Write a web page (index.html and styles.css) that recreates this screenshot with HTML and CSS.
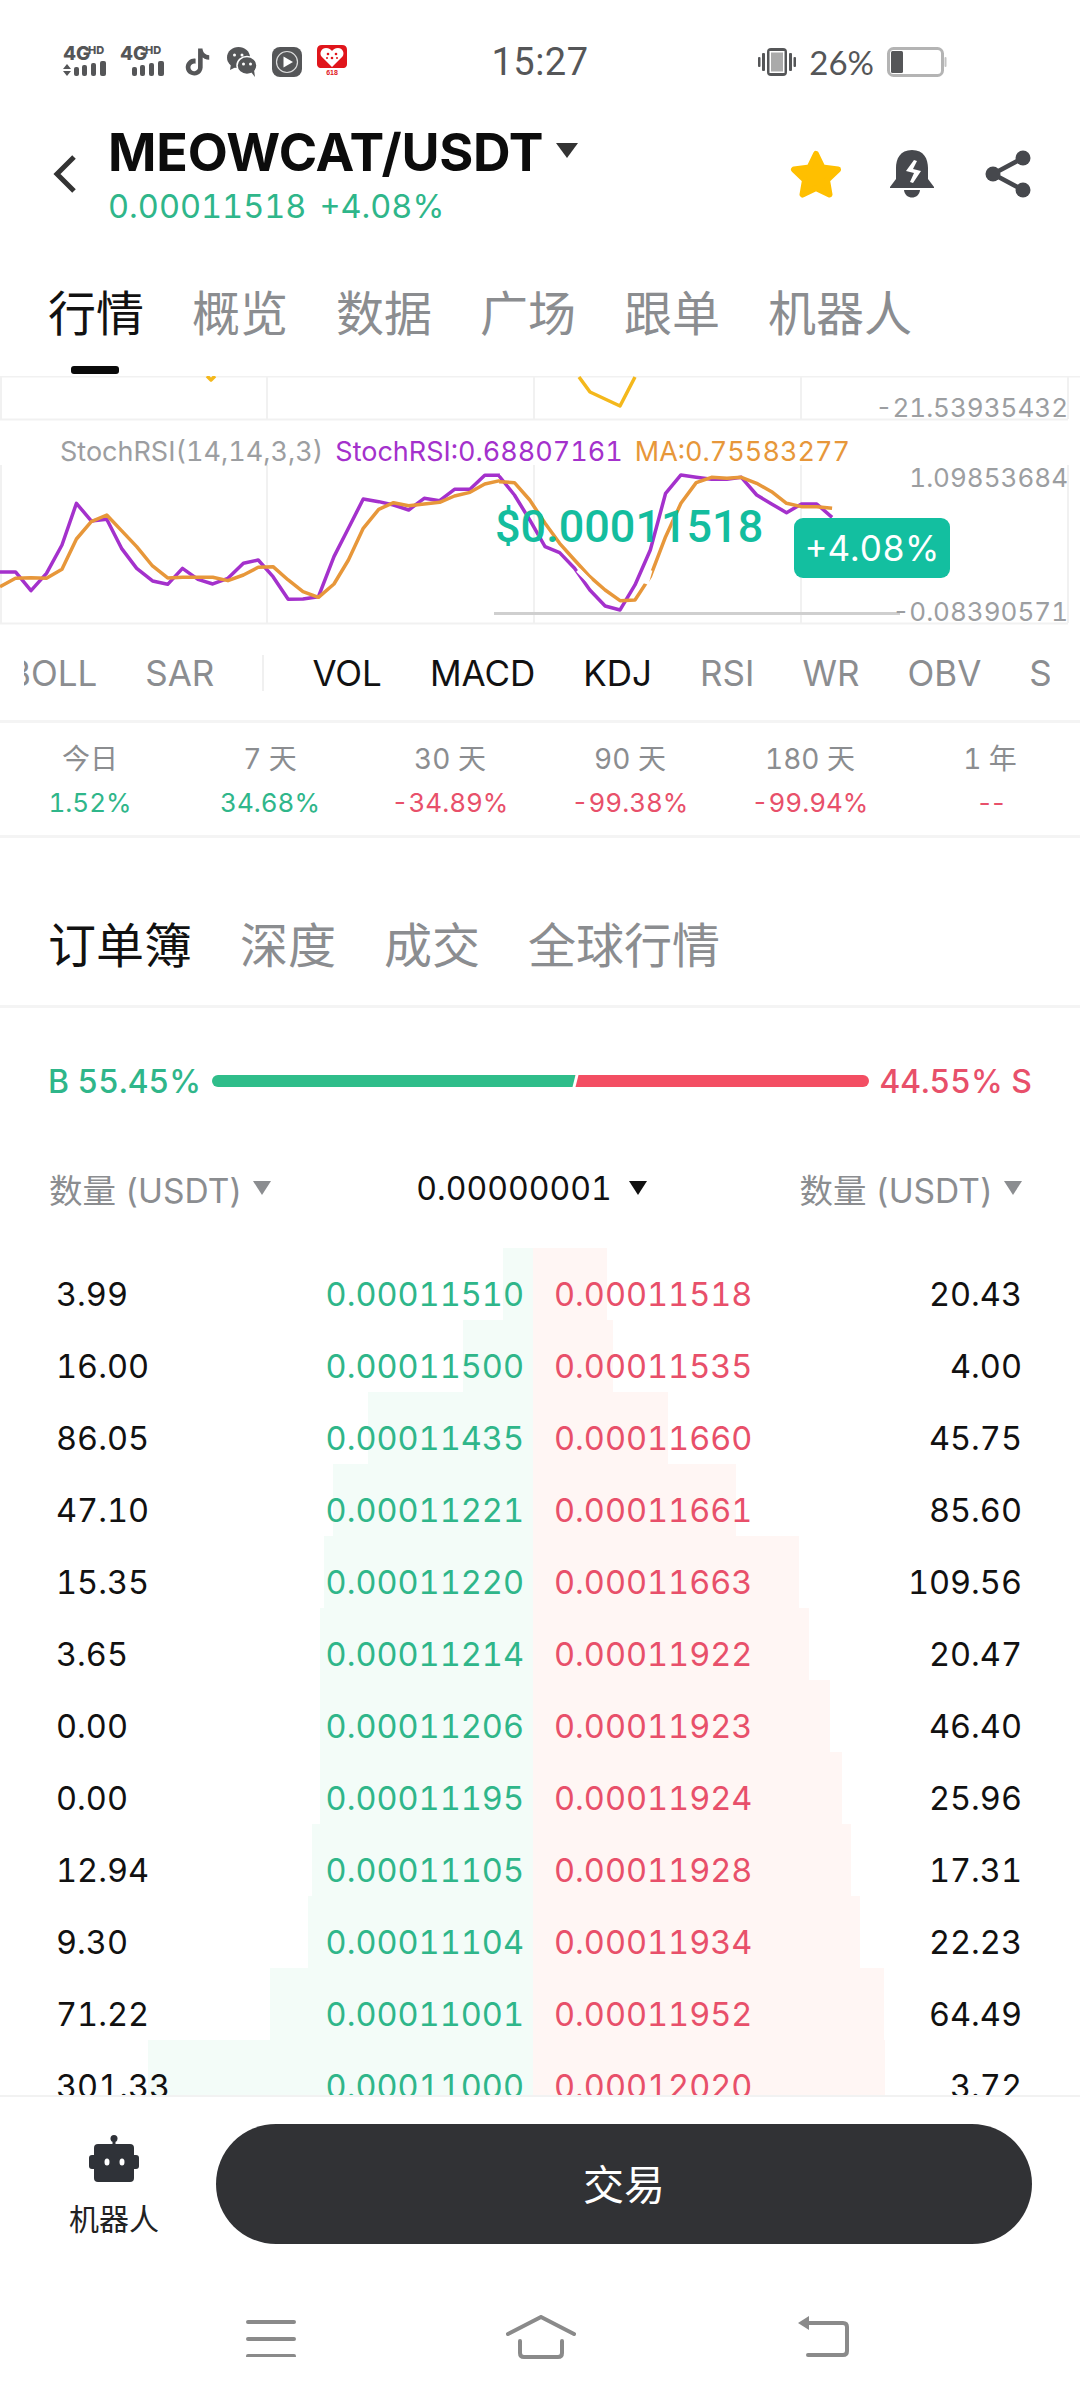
FILE: index.html
```html
<!DOCTYPE html>
<html lang="zh">
<head>
<meta charset="utf-8">
<title>MEOWCAT/USDT</title>
<link rel="stylesheet" href="styles.css">
</head>
<body>
<div class="page">
  <div class="status">
    <div class="status-left">
      <svg class="net" viewBox="0 0 46 42" width="46" height="42"><text x="0" y="19" class="net-4g">4G</text><text x="25" y="13" class="net-hd">HD</text><path class="ic" d="M0 28l4-5 4 5zM0 30h8l-4 5z"/><rect class="ic" x="11" y="26" width="5" height="9" rx="2"/><rect class="ic" x="19" y="24" width="5" height="11" rx="2"/><rect class="ic" x="28" y="22" width="5" height="13" rx="2"/><rect class="ic" x="37" y="20" width="6" height="15" rx="2"/></svg>
      <svg class="net net2" viewBox="0 0 46 42" width="46" height="42"><text x="0" y="19" class="net-4g">4G</text><text x="25" y="13" class="net-hd">HD</text><rect class="ic" x="12" y="26" width="5" height="9" rx="2"/><rect class="ic" x="20" y="24" width="5" height="11" rx="2"/><rect class="ic" x="29" y="22" width="5" height="13" rx="2"/><rect class="ic" x="38" y="20" width="6" height="15" rx="2"/></svg>
      <svg class="app tiktok" viewBox="0 0 24 24" width="27" height="30"><path class="ic" d="M12.525.02c1.31-.02 2.61-.01 3.91-.02.08 1.53.63 3.09 1.75 4.17 1.12 1.11 2.7 1.62 4.24 1.79v4.03c-1.44-.05-2.89-.35-4.2-.97-.57-.26-1.1-.59-1.62-.93-.01 2.92.01 5.84-.02 8.75-.08 1.4-.54 2.79-1.35 3.94-1.31 1.92-3.58 3.17-5.91 3.21-1.43.08-2.86-.31-4.08-1.03-2.02-1.19-3.44-3.37-3.65-5.71-.02-.5-.03-1-.01-1.49.18-1.9 1.12-3.72 2.58-4.96 1.66-1.44 3.98-2.13 6.15-1.72.02 1.48-.04 2.96-.04 4.44-.99-.32-2.15-.23-3.02.37-.63.41-1.11 1.04-1.36 1.75-.21.51-.15 1.07-.14 1.61.24 1.64 1.82 3.02 3.5 2.87 1.12-.01 2.19-.66 2.77-1.61.19-.33.4-.67.41-1.06.1-1.79.06-3.57.07-5.36.01-4.03-.01-8.05.02-12.07z"/></svg>
      <svg class="app wechat" viewBox="0 0 30 30" width="30" height="30"><ellipse class="ic" cx="11.500" cy="10.500" rx="11.500" ry="10.500"/><path class="ic" d="M4 17l-1 6 6-3z"/><circle class="white" cx="7.500" cy="8" r="1.500"/><circle class="white" cx="15" cy="8" r="1.500"/><ellipse class="ic halo" cx="20" cy="18.500" rx="10" ry="9"/><path class="ic" d="M24 25l4 5-1-7z"/><circle class="white" cx="16.500" cy="17" r="1.500"/><circle class="white" cx="23.500" cy="17" r="1.500"/></svg>
      <svg class="app" viewBox="0 0 30 30" width="30" height="30"><rect class="ic" width="30" height="30" rx="8"/><circle class="ring" cx="15" cy="15" r="10.500"/><path class="white" d="M11.500 9.500L21 15l-9.500 5.500z"/></svg>
      <svg class="app" viewBox="0 0 30 34" width="30" height="34"><path class="red" d="M5 0h20q5 0 5 5v14q0 3-3 4H3q-3-1-3-4V5q0-5 5-5z"/><path class="white" d="M15 22L4.500 11.500C2 8 4.500 3 9 3c3 0 5 1.500 6 3 1-1.500 3-3 6-3 4.500 0 7 5 4.500 8.500z"/><circle class="red" cx="11" cy="9" r="1.300"/><circle class="red" cx="19" cy="9" r="1.300"/><circle class="red" cx="15" cy="13" r="1.300"/><circle class="red" cx="10" cy="13" r="1"/><circle class="red" cx="20" cy="13" r="1"/><text x="15" y="30" class="red-label">618</text></svg>
    </div>
    <div class="time">15:27</div>
    <div class="status-right">
      <svg viewBox="0 0 38 28" width="38" height="28"><rect class="ic" x="0" y="9" width="2.500" height="10" rx="1"/><rect class="ic" x="4" y="5" width="3" height="18" rx="1"/><rect class="ic" x="31" y="5" width="3" height="18" rx="1"/><rect class="ic" x="35.500" y="9" width="2.500" height="10" rx="1"/><rect class="ic" x="9" y="0" width="20" height="28" rx="4"/><rect class="white" x="11.500" y="3" width="15" height="22"/><rect class="phone-fill" x="13" y="4.500" width="12" height="19"/></svg>
      <span class="batt-text">26%</span>
      <svg viewBox="0 0 60 30" width="60" height="30"><rect class="batt-case" x="1.500" y="1.500" width="54" height="27" rx="5"/><rect class="ic" x="4" y="4" width="12" height="22" rx="1.500"/><rect class="batt-nub" x="57.500" y="10" width="2" height="10" rx="1"/></svg>
    </div>
  </div>

  <header class="head">
    <svg class="back" viewBox="0 0 24 38" width="24" height="38"><path d="M21 2L4 19l17 17"/></svg>
    <div class="title-block">
      <div class="title-line"><span class="title">MEOWCAT/USDT</span><span class="caret caret-title"></span></div>
      <div class="sub"><span>0.00011518</span><span>+4.08%</span></div>
    </div>
    <div class="actions">
      <svg viewBox="0 0 52 48" width="52" height="48"><path class="star" d="M26 4l6.500 13.500 15.500 2-11 10.500 2.500 14.500L26 38l-13.500 6.500L15 30 4 19.500l15.500-2z"/></svg>
      <svg viewBox="0 0 44 48" width="44" height="48"><path class="dark" d="M22 0C10 0 6 9 6 18v11L0 37v1h44v-1l-6-8V18C38 9 34 0 22 0z"/><path class="dark" d="M14 40h16c-1 10-15 10-16 0z"/><path class="white" d="M24 10l-8 11 8 2-4 9 3 1 8-12-8-2 4-8z"/></svg>
      <svg class="share" viewBox="0 0 46 48" width="46" height="48"><path class="share-line" d="M38 8L8 24l30 16"/><circle class="dark" cx="38" cy="8" r="7.500"/><circle class="dark" cx="8" cy="24" r="7.500"/><circle class="dark" cx="38" cy="40" r="7.500"/></svg>
    </div>
  </header>

  <nav class="tabs tabs-main">
    <span class="tab active">行情<i class="underline"></i></span>
    <span class="tab">概览</span><span class="tab">数据</span><span class="tab">广场</span><span class="tab">跟单</span><span class="tab">机器人</span>
  </nav>

  <section class="chart">
    <svg class="chart-svg" viewBox="0 376 1080 264" width="1080" height="264">
      <path class="grid" d="M0 376.500H1080M0 419.500H1068M0 623.500H1068M1 376V419M267 376V419M534 376V419M801 376V419M1068 376V419M1 465V623M267 465V623M534 465V623M801 465V623M1068 465V623"/>
      <polyline class="line yellow" points="207,376 211,380 215,376"/>
      <polyline class="line yellow" points="579,377 590,392 620,406 635,377"/>
      <polyline class="line purple" transform="translate(0 440) scale(.3443 .3333)" points="0,396 45,396 90,452 135,400 180,315 222,190 265,243 310,238 353,325 397,385 443,423 487,433 530,385 575,418 618,432 662,415 707,370 750,360 793,410 837,478 880,477 925,470 970,350 1012,265 1055,177 1100,185 1143,195 1187,210 1232,175 1277,182 1320,148 1365,148 1408,106 1452,106"/>
      <polyline class="line purple" transform="translate(480 360) scale(.3827 .3333)" points="50,348 90,405 130,480 170,560 208,578 247,625 287,690 327,738 366,750 405,675 445,570 485,400 525,345 565,352 605,358 645,358 683,352 723,405 762,432 801,458 840,432 880,432 920,472"/>
      <polyline class="line orange" transform="translate(0 440) scale(.3443 .3333)" points="0,440 45,415 90,413 135,415 180,388 222,297 265,245 310,225 353,272 397,320 443,378 487,414 530,412 575,412 618,412 662,422 707,405 750,382 793,380 837,420 880,455 925,472 970,432 1012,360 1055,265 1100,208 1143,188 1187,197 1232,192 1277,187 1320,168 1365,157 1408,132 1452,122"/>
      <polyline class="line orange" transform="translate(480 360) scale(.3827 .3333)" points="50,365 90,368 130,420 170,490 208,550 247,600 287,650 327,690 366,722 405,720 445,650 485,530 525,430 565,368 605,352 645,355 683,352 723,370 762,395 801,430 840,440 880,440 920,445"/>
      <path class="gap" d="M578 570l12 12M635 566l-8 20M650 570l-4 14"/>
      <path class="price-line" d="M494 613.500H900"/>
    </svg>
    <span class="axis axis-a">-21.53935432</span>
    <div class="legend"><span class="lg-grey">StochRSI(14,14,3,3)</span><span class="lg-purple">StochRSI:0.68807161</span><span class="lg-orange">MA:0.75583277</span></div>
    <span class="axis axis-b">1.09853684</span>
    <span class="axis axis-c">-0.08390571</span>
    <span class="big-price">$0.00011518</span>
    <span class="badge">+4.08%</span>
  </section>

  <div class="indicators">
    <div class="ind-track">
      <span class="ind boll">BOLL</span><span class="ind">SAR</span><i class="ind-sep"></i><span class="ind on">VOL</span><span class="ind on">MACD</span><span class="ind on">KDJ</span><span class="ind">RSI</span><span class="ind">WR</span><span class="ind">OBV</span><span class="ind">StochRSI</span>
    </div>
  </div>

  <div class="periods">
    <div class="period"><span class="p-label">今日</span><span class="p-val up">1.52%</span></div>
    <div class="period"><span class="p-label">7 天</span><span class="p-val up">34.68%</span></div>
    <div class="period"><span class="p-label">30 天</span><span class="p-val down">-34.89%</span></div>
    <div class="period"><span class="p-label">90 天</span><span class="p-val down">-99.38%</span></div>
    <div class="period"><span class="p-label">180 天</span><span class="p-val down">-99.94%</span></div>
    <div class="period"><span class="p-label">1 年</span><span class="p-val p-dash down">--</span></div>
  </div>

  <nav class="tabs tabs-book">
    <span class="tab active-plain">订单簿</span><span class="tab">深度</span><span class="tab">成交</span><span class="tab">全球行情</span>
  </nav>

  <div class="ratio">
    <span class="up">B 55.45%</span>
    <div class="ratio-bar"><i class="ratio-buy"></i><i class="ratio-sell"></i></div>
    <span class="down">44.55% S</span>
  </div>

  <div class="book-head">
    <span class="bh-item">数量 (USDT)<i class="caret caret-grey"></i></span>
    <span class="bh-item bh-mid">0.00000001<i class="caret caret-dark"></i></span>
    <span class="bh-item">数量 (USDT)<i class="caret caret-grey"></i></span>
  </div>

  <div class="book">
    <div class="row"><div class="side buy"><i class="bar" style="width:30px"></i><span>3.99</span><span class="up">0.00011510</span></div><div class="side sell"><i class="bar" style="width:74px"></i><span class="down">0.00011518</span><span>20.43</span></div></div>
    <div class="row"><div class="side buy"><i class="bar" style="width:70px"></i><span>16.00</span><span class="up">0.00011500</span></div><div class="side sell"><i class="bar" style="width:80px"></i><span class="down">0.00011535</span><span>4.00</span></div></div>
    <div class="row"><div class="side buy"><i class="bar" style="width:165px"></i><span>86.05</span><span class="up">0.00011435</span></div><div class="side sell"><i class="bar" style="width:135px"></i><span class="down">0.00011660</span><span>45.75</span></div></div>
    <div class="row"><div class="side buy"><i class="bar" style="width:200px"></i><span>47.10</span><span class="up">0.00011221</span></div><div class="side sell"><i class="bar" style="width:203px"></i><span class="down">0.00011661</span><span>85.60</span></div></div>
    <div class="row"><div class="side buy"><i class="bar" style="width:209px"></i><span>15.35</span><span class="up">0.00011220</span></div><div class="side sell"><i class="bar" style="width:266px"></i><span class="down">0.00011663</span><span>109.56</span></div></div>
    <div class="row"><div class="side buy"><i class="bar" style="width:213px"></i><span>3.65</span><span class="up">0.00011214</span></div><div class="side sell"><i class="bar" style="width:276px"></i><span class="down">0.00011922</span><span>20.47</span></div></div>
    <div class="row"><div class="side buy"><i class="bar" style="width:213px"></i><span>0.00</span><span class="up">0.00011206</span></div><div class="side sell"><i class="bar" style="width:297px"></i><span class="down">0.00011923</span><span>46.40</span></div></div>
    <div class="row"><div class="side buy"><i class="bar" style="width:213px"></i><span>0.00</span><span class="up">0.00011195</span></div><div class="side sell"><i class="bar" style="width:309px"></i><span class="down">0.00011924</span><span>25.96</span></div></div>
    <div class="row"><div class="side buy"><i class="bar" style="width:221px"></i><span>12.94</span><span class="up">0.00011105</span></div><div class="side sell"><i class="bar" style="width:318px"></i><span class="down">0.00011928</span><span>17.31</span></div></div>
    <div class="row"><div class="side buy"><i class="bar" style="width:225px"></i><span>9.30</span><span class="up">0.00011104</span></div><div class="side sell"><i class="bar" style="width:327px"></i><span class="down">0.00011934</span><span>22.23</span></div></div>
    <div class="row"><div class="side buy"><i class="bar" style="width:263px"></i><span>71.22</span><span class="up">0.00011001</span></div><div class="side sell"><i class="bar" style="width:351px"></i><span class="down">0.00011952</span><span>64.49</span></div></div>
    <div class="row"><div class="side buy"><i class="bar" style="width:385px"></i><span>301.33</span><span class="up">0.00011000</span></div><div class="side sell"><i class="bar" style="width:352px"></i><span class="down">0.00012020</span><span>3.72</span></div></div>
  </div>

  <footer class="foot">
    <div class="foot-actions">
      <div class="robot">
        <svg viewBox="0 0 50 47" width="50" height="47"><circle class="robot-fill" cx="25" cy="3.500" r="3.500"/><rect class="robot-fill" x="23.500" y="4" width="3" height="8"/><rect class="robot-fill" x="5" y="9" width="40" height="38" rx="4"/><rect class="robot-fill" x="0" y="20" width="50" height="14" rx="3"/><ellipse class="white" cx="18" cy="27" rx="2.500" ry="3.500"/><ellipse class="white" cx="33" cy="27" rx="2.500" ry="3.500"/></svg>
        <span>机器人</span>
      </div>
      <button class="trade">交易</button>
    </div>
    <div class="sysnav">
      <svg viewBox="0 0 50 40" width="50" height="40"><path class="nav-stroke" d="M2 5H48M2 22H48M2 39H48"/></svg>
      <svg viewBox="0 0 70 44" width="70" height="44"><path class="nav-stroke" d="M2 19L35 2l33 17M14 26v12q0 4 4 4h34q4 0 4-4V26"/></svg>
      <svg viewBox="0 0 51 42" width="51" height="42"><path class="nav-fill" d="M0 7L11 0v14z"/><path class="nav-stroke" d="M9 7H45q4 0 4 4v24q0 4-4 4H10"/></svg>
    </div>
  </footer>
</div>
</body>
</html>
```
FILE: styles.css
```css
* { box-sizing: border-box; }
html, body { margin: 0; padding: 0; background: #fff; }
body { font-family: Inter, "Noto Sans CJK SC", sans-serif; color: #111; font-variant-numeric: tabular-nums; }
i { display: block; font-style: normal; }
svg { display: block; flex: none; }

.page { width: 1080px; height: 2400px; display: flex; flex-direction: column; overflow: hidden; background: #fff; }

.ic { fill: #555658; }
.white { fill: #fff; }
.red { fill: #e0151b; }
.red-label { font: 700 7px "Liberation Sans", sans-serif; fill: #e0151b; text-anchor: middle; }
.ring { fill: none; stroke: #fff; stroke-width: 1.2; opacity: .8; }
.halo { stroke: #fff; stroke-width: 1.5; }
.phone-fill { fill: #aaa; }
.batt-case { fill: #fff; stroke: #b4b4b4; stroke-width: 3; }
.batt-nub { fill: #c4c4c4; }
.net-4g { font: 800 19px Inter, sans-serif; fill: #555658; }
.net-hd { font: 800 11px Inter, sans-serif; fill: #555658; }

.status { height: 120px; display: grid; grid-template-columns: 1fr auto 1fr; align-items: center; padding: 4px 63px 0; }
.status-left { display: flex; align-items: center; }
.status-left .net2 { margin-left: 11px; }
.status-left .app { margin-left: 15px; }
.status-left .tiktok { margin-left: 18px; }
.status-left .wechat { margin-left: 16px; }
.time { font: 400 38px Roboto, sans-serif; color: #555658; letter-spacing: .5px; }
.status-right { display: flex; align-items: center; justify-content: flex-end; gap: 13px; padding-right: 70px; }
.batt-text { font: 400 33px Lato, sans-serif; color: #555658; }

.head { height: 120px; display: flex; align-items: flex-start; position: relative; padding: 0 49px 0 53px; }
.back { margin-top: 35px; }
.back path { fill: none; stroke: #333; stroke-width: 5; }
.title-block { margin-left: 31px; flex: 1; }
.title-line { display: flex; align-items: center; height: 62px; margin-top: 2px; }
.title { font-size: 52px; font-weight: 700; color: #0c0c0c; letter-spacing: -.2px; line-height: 62px; }
.sub { display: flex; gap: 13px; font-size: 32.500px; color: #2fb68a; line-height: 38px; margin-top: 4px; }
.caret { display: block; width: 0; height: 0; border-style: solid; border-color: transparent; border-width: 14px 9px 0; }
.caret-title { border-width: 15px 11.500px 0; border-top-color: #333; margin: -6px 0 0 13px; }
.actions { display: flex; align-items: flex-start; margin-top: 30px; gap: 48px; }
.actions .share { margin-left: 3px; }
.star { fill: #ffbf00; stroke: #ffbf00; stroke-width: 6; stroke-linejoin: round; }
.dark { fill: #46484d; }
.share-line { fill: none; stroke: #46484d; stroke-width: 4.500; }

.tabs { display: flex; gap: 48px; padding-left: 48px; font-size: 48px; color: #8b8d90; }
.tab { position: relative; line-height: 60px; }
.tab.active, .tab.active-plain { color: #111; }
.tabs-main { height: 136px; padding-top: 44px; }
.underline { position: absolute; left: 23px; top: 82px; width: 48px; height: 8px; border-radius: 3px; background: #0a0a0a; }

.chart { position: relative; height: 264px; font-size: 27px; }
.chart-svg { position: absolute; left: 0; top: 0; }
.grid { fill: none; stroke: #f1f1f1; stroke-width: 2; }
.line { fill: none; stroke-width: 3.500; vector-effect: non-scaling-stroke; stroke-linejoin: round; }
.yellow { stroke: #f4b81c; }
.purple { stroke: #a431cc; }
.orange { stroke: #e7973a; }
.gap { stroke: #fff; stroke-width: 5; fill: none; }
.price-line { stroke: #cfcfcf; stroke-width: 3; }
.axis { position: absolute; right: 12px; color: #9c9ea1; line-height: 36px; font-size: 26px; }
.axis-a { top: 14px; }
.axis-b { top: 84px; }
.axis-c { top: 218px; }
.legend { position: absolute; left: 60px; top: 58px; display: flex; gap: 12px; line-height: 36px; }
.lg-grey { color: #9c9ea1; }
.lg-purple { color: #a431cc; }
.lg-orange { color: #e7973a; }
.big-price { position: absolute; left: 495px; top: 122px; font: 500 45px/58px Roboto, sans-serif; color: #14bd9e; }
.badge { position: absolute; left: 794px; top: 142px; width: 156px; height: 60px; border-radius: 9px; background: #13bfa0; color: #fff; font-size: 35px; line-height: 60px; text-align: center; }

.indicators { height: 83px; border-bottom: 3px solid #f4f4f4; padding: 0 30px 0 24px; }
.ind-track { height: 66px; display: flex; align-items: center; gap: 48px; overflow: hidden; font-size: 35px; color: #8b8d90; white-space: nowrap; }
.ind { flex: none; }
.ind.on { color: #111; }
.boll { margin-left: -16px; }
.ind-sep { flex: none; width: 2px; height: 36px; background: #f0f0f0; }

.periods { height: 115px; display: grid; grid-template-columns: repeat(6, 180px); border-bottom: 3px solid #f4f4f4; }
.period { display: flex; flex-direction: column; align-items: center; padding-top: 16px; }
.p-label { font-size: 28px; line-height: 40px; color: #8b8d90; }
.p-val { font-size: 26px; line-height: 40px; margin-top: 4px; }
.p-dash { letter-spacing: -3px; }
.up { color: #2fb68a; }
.down { color: #e8506a; }

.tabs-book { height: 170px; padding-top: 78px; border-bottom: 3px solid #f4f4f4; }

.ratio { height: 146px; display: flex; align-items: center; justify-content: space-between; padding: 0 48px; font-size: 32px; font-weight: 500; }
.ratio-bar { width: 657px; height: 12px; display: flex; }
.ratio-buy { width: 363px; position: relative; background: #2fbd8a; border-radius: 6px 0 0 6px; }
.ratio-buy::after { content: ""; position: absolute; top: 0; bottom: 0; right: -2px; width: 3px; background: #fff; transform: skewX(-14deg); }
.ratio-sell { flex: 1; background: #f34e63; border-radius: 0 6px 6px 0; }

.book-head { height: 70px; display: flex; align-items: center; justify-content: space-between; padding: 0 58px 2px 49px; font-size: 33.500px; color: #8b8d90; }
.bh-item { display: flex; align-items: center; gap: 11px; }
.bh-mid { color: #111; margin-left: -8px; gap: 17px; font-size: 32px; }
.caret-grey { border-top-color: #8b8d90; }
.caret-dark { border-top-color: #111; }

.book { flex: 1; min-height: 0; overflow: hidden; padding-top: 24px; font-size: 32.500px; }
.row { height: 72px; display: grid; grid-template-columns: 533px 547px; }
.side { position: relative; display: flex; justify-content: space-between; padding-top: 24px; line-height: 46px; white-space: nowrap; }
.side span { position: relative; }
.buy { padding-left: 56px; padding-right: 9px; }
.sell { padding-left: 21px; padding-right: 58px; }
.bar { position: absolute; top: 0; height: 72px; }
.buy .bar { right: 0; background: #f3fcf8; }
.sell .bar { left: 0; background: #fff6f4; }

.foot { height: 305px; flex: none; border-top: 2px solid #f2f2f2; background: #fff; }
.foot-actions { display: flex; padding: 27px 48px 0 69px; align-items: flex-start; }
.robot { width: 147px; display: flex; flex-direction: column; align-items: flex-start; font-size: 30px; line-height: 40px; color: #222; }
.robot svg { margin: 11px 0 17px 20px; }
.robot-fill { fill: #2f3238; }
.trade { flex: 1; height: 120px; border: 0; border-radius: 60px; background: #313235; color: #fff; font: 400 41px Inter, "Noto Sans CJK SC", sans-serif; padding: 0 0 4px; }
.sysnav { display: flex; padding: 71px 0 0 246px; align-items: center; }
.sysnav svg:nth-child(2) { margin: 0 222px 0 210px; }
.nav-stroke { fill: none; stroke: #8a8a8a; stroke-width: 4; stroke-linecap: round; }
.nav-fill { fill: #8a8a8a; }
```
